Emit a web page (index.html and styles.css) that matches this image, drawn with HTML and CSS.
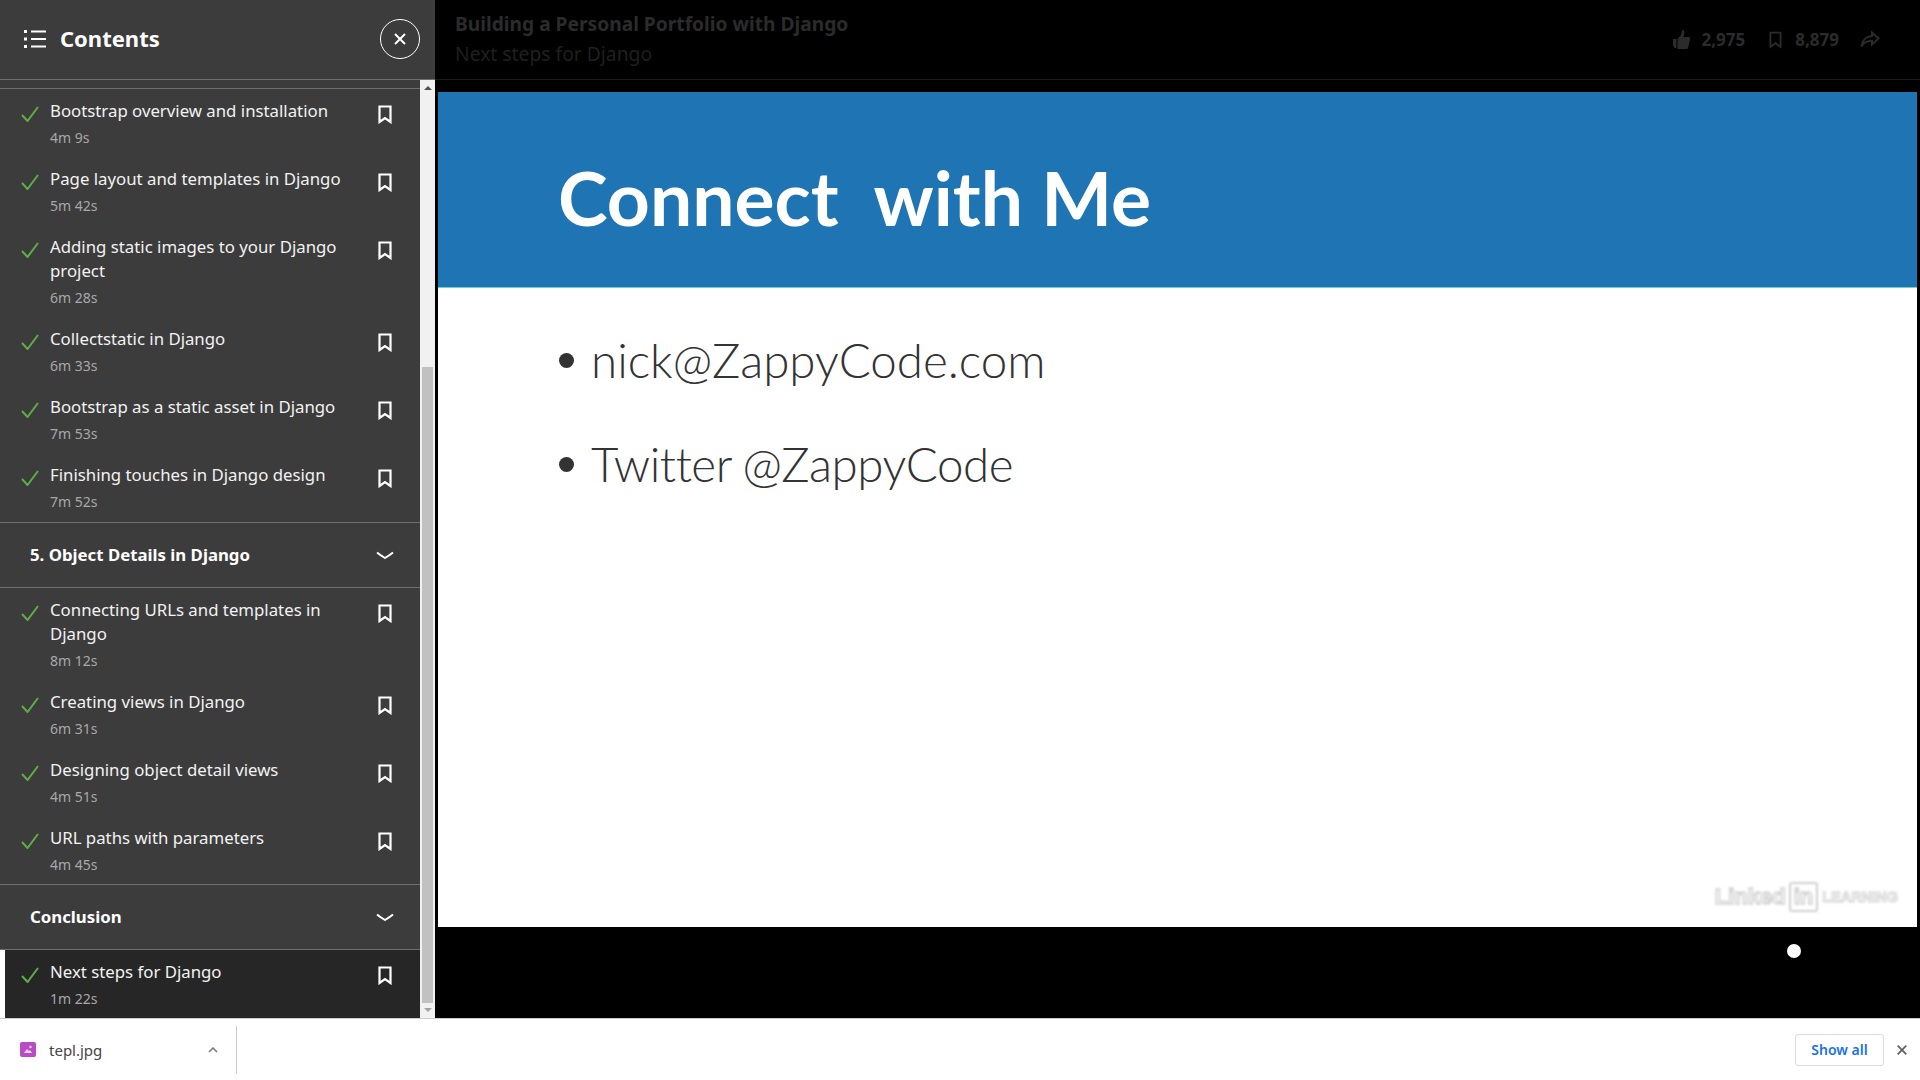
FILE: index.html
```html
<!DOCTYPE html>
<html lang="en">
<head>
<meta charset="UTF-8">
<meta name="viewport" content="width=device-width, initial-scale=1.0">
<title>Next steps for Django</title>
<link rel="stylesheet" href="styles.css">
</head>
<body>
<svg class="defs" width="0" height="0">
  <symbol id="check" viewBox="0 0 18 16"><path d="M1 9l5.500 6L17 1" fill="none" stroke="#5fae45" stroke-width="2"/></symbol>
  <symbol id="mark" viewBox="0 0 14 19"><path d="M1.500 1.500h11v15.500L7 13l-5.500 4z" fill="none" stroke="#fff" stroke-width="2.200"/></symbol>
  <symbol id="chev" viewBox="0 0 18 9"><path d="M1 1.500c3 2.500 5.500 4 8 5.500 2.500-1.500 5-3 8-5.500" fill="none" stroke="#fff" stroke-width="2"/></symbol>
</svg>
<div class="main">
  <aside class="sidebar">
    <header class="side-head">
      <svg class="list-icon" width="24" height="20" viewBox="0 0 24 20"><path d="M8 2.500h15M8 10h15M8 17.500h15" stroke="#fff" stroke-width="2"/><path d="M1 1h3v3H1zM1 8.500h3v3H1zM1 16h3v3H1z" fill="#fff"/></svg>
      <h1>Contents</h1>
      <button class="close-btn"><svg width="12" height="12" viewBox="0 0 12 12"><path d="M1 1l10 10M11 1L1 11" stroke="#fff" stroke-width="2"/></svg></button>
    </header>
    <div class="side-body">
      <div class="toc">
        <div class="toc-top"></div>
        <ul class="lessons first">
          <li><svg class="check"><use href="#check"/></svg><div class="txt"><p>Bootstrap overview and installation</p><span>4m 9s</span></div><svg class="mark"><use href="#mark"/></svg></li>
          <li><svg class="check"><use href="#check"/></svg><div class="txt"><p>Page layout and templates in Django</p><span>5m 42s</span></div><svg class="mark"><use href="#mark"/></svg></li>
          <li><svg class="check"><use href="#check"/></svg><div class="txt"><p>Adding static images to your Django project</p><span>6m 28s</span></div><svg class="mark"><use href="#mark"/></svg></li>
          <li><svg class="check"><use href="#check"/></svg><div class="txt"><p>Collectstatic in Django</p><span>6m 33s</span></div><svg class="mark"><use href="#mark"/></svg></li>
          <li><svg class="check"><use href="#check"/></svg><div class="txt"><p>Bootstrap as a static asset in Django</p><span>7m 53s</span></div><svg class="mark"><use href="#mark"/></svg></li>
          <li><svg class="check"><use href="#check"/></svg><div class="txt"><p>Finishing touches in Django design</p><span>7m 52s</span></div><svg class="mark"><use href="#mark"/></svg></li>
        </ul>
        <div class="chapter"><h2>5. Object Details in Django</h2><svg class="chev"><use href="#chev"/></svg></div>
        <ul class="lessons">
          <li><svg class="check"><use href="#check"/></svg><div class="txt"><p>Connecting URLs and templates in Django</p><span>8m 12s</span></div><svg class="mark"><use href="#mark"/></svg></li>
          <li><svg class="check"><use href="#check"/></svg><div class="txt"><p>Creating views in Django</p><span>6m 31s</span></div><svg class="mark"><use href="#mark"/></svg></li>
          <li><svg class="check"><use href="#check"/></svg><div class="txt"><p>Designing object detail views</p><span>4m 51s</span></div><svg class="mark"><use href="#mark"/></svg></li>
          <li><svg class="check"><use href="#check"/></svg><div class="txt"><p>URL paths with parameters</p><span>4m 45s</span></div><svg class="mark"><use href="#mark"/></svg></li>
        </ul>
        <div class="chapter"><h2>Conclusion</h2><svg class="chev"><use href="#chev"/></svg></div>
        <ul class="lessons">
          <li class="current"><svg class="check"><use href="#check"/></svg><div class="txt"><p>Next steps for Django</p><span>1m 22s</span></div><svg class="mark"><use href="#mark"/></svg></li>
        </ul>
      </div>
      <div class="scrollbar">
        <div class="arrow up"></div>
        <div class="thumb"></div>
        <div class="arrow down"></div>
      </div>
    </div>
  </aside>
  <section class="player">
    <header class="topbar">
      <div class="titles">
        <div class="course">Building a Personal Portfolio with Django</div>
        <div class="lesson-name">Next steps for Django</div>
      </div>
      <div class="stats">
        <svg width="17" height="19" viewBox="0 0 17 19"><path d="M0 9h3.500v9H1.500L0 16zM4.500 9L8 5 9 0c2 0 2.800 1.500 2.300 3.500L10.500 7H16c1 0 1 1 1 2l-1.800 8.500c-.3 1-1 1.500-2 1.500H4.500z" fill="#2b2b2b"/></svg>
        <span class="num">2,975</span>
        <svg class="stat-mark" width="13" height="18" viewBox="0 0 14 19"><path d="M1.500 1.500h11v15.500L7 13l-5.500 4z" fill="none" stroke="#2b2b2b" stroke-width="2"/></svg>
        <span class="num">8,879</span>
        <svg class="share" width="20" height="17" viewBox="0 0 20 17"><path d="M12 1.500l6.500 6-6.500 6V10C7 9.500 3.500 11.500 1.500 15.500 2 9.500 6 5.500 12 5z" fill="none" stroke="#2b2b2b" stroke-width="2"/></svg>
      </div>
    </header>
    <div class="slide">
      <div class="slide-head">Connect  with Me</div>
      <ul class="slide-list">
        <li>nick@ZappyCode.com</li>
        <li>Twitter @ZappyCode</li>
      </ul>
      <div class="watermark"><span>Linked</span><b>in</b><i>LEARNING</i></div>
    </div>
    <div class="controls"><div class="dot"></div></div>
  </section>
</div>
<footer class="downloads">
  <div class="dl-item">
    <svg width="16" height="15" viewBox="0 0 16 15"><rect width="16" height="15" rx="2" fill="#b84cc4"/><path d="M4 11l3-4 2 2 1-1 2 3z" fill="#f3d3f7"/><circle cx="10.500" cy="5" r="1.200" fill="#f3d3f7"/></svg>
    <span>tepl.jpg</span>
    <svg class="dl-chev" width="10" height="6" viewBox="0 0 10 6"><path d="M1 5l4-4 4 4" fill="none" stroke="#777" stroke-width="1.500"/></svg>
  </div>
  <button class="show-all">Show all</button>
  <svg class="dl-close" width="10" height="10" viewBox="0 0 10 10"><path d="M.7.7l8.600 8.600M9.300.7L.7 9.300" stroke="#5f6368" stroke-width="1.800"/></svg>
</footer>
</body>
</html>
```

FILE: styles.css
```css
* {
  box-sizing: border-box;
}
body {
  margin: 0;
  width: 1920px;
  height: 1080px;
  overflow: hidden;
  background-color: #000;
  font-family: "Noto Sans", Arial, sans-serif;
}
.defs {
  position: absolute;
}
h1, h2, p, ul {
  margin: 0;
  padding: 0;
}
ul {
  list-style: none;
}
.main {
  display: flex;
  height: 1018px;
}

/* sidebar */
.sidebar {
  width: 435px;
  flex: none;
  display: flex;
  flex-direction: column;
  background-color: #3c3c3c;
}
.side-head {
  height: 80px;
  flex: none;
  display: flex;
  align-items: center;
  padding: 0 15px 2px 23px;
  border-bottom: 1px solid #6e6e6e;
}
.side-head h1 {
  flex: 1;
  margin: -2px 0 0 13px;
  font-size: 22px;
  font-weight: 700;
  color: #fff;
}
.close-btn {
  width: 40px;
  height: 40px;
  padding: 0;
  display: flex;
  align-items: center;
  justify-content: center;
  background: none;
  border: 1.500px solid #fff;
  border-radius: 50%;
}
.side-body {
  flex: 1;
  display: flex;
  min-height: 0;
}
.toc {
  width: 420px;
  flex: none;
}
.toc-top {
  height: 9px;
  border-bottom: 1px solid #6e6e6e;
}
.lessons li {
  display: flex;
  padding: 10px 28px 9px 21px;
}
.lessons.first {
  padding-bottom: 1px;
}
.check {
  width: 18px;
  height: 16px;
  margin-top: 7px;
  flex: none;
}
.txt {
  flex: 1;
  margin-left: 11px;
  padding-right: 20px;
}
.txt p {
  font-size: 16.800px;
  line-height: 24px;
  color: #f2f2f2;
}
.txt span {
  display: block;
  margin-top: 5px;
  font-size: 14px;
  line-height: 20px;
  color: #a8a8a8;
}
.mark {
  width: 14px;
  height: 19px;
  margin-top: 6px;
  flex: none;
}
.lessons li.current {
  background-color: #262626;
  border-left: 5px solid #fff;
  padding-left: 16px;
}
.chapter {
  height: 66px;
  display: flex;
  align-items: center;
  justify-content: space-between;
  padding: 0 26px 0 30px;
  border-top: 1px solid #6e6e6e;
  border-bottom: 1px solid #6e6e6e;
}
.chapter h2 {
  margin-top: -2px;
  font-size: 16.800px;
  font-weight: 700;
  color: #fff;
}
.chev {
  width: 18px;
  height: 9px;
}
.scrollbar {
  width: 15px;
  flex: none;
  display: flex;
  flex-direction: column;
  align-items: center;
  background-color: #f1f1f1;
  padding: 6px 0;
}
.arrow {
  width: 0;
  height: 0;
  border-left: 4px solid transparent;
  border-right: 4px solid transparent;
  flex: none;
}
.arrow.up {
  border-bottom: 4px solid #505050;
}
.arrow.down {
  border-top: 4px solid #a3a3a3;
}
.thumb {
  width: 11px;
  flex: 1;
  margin: 277px 0 5px;
  background-color: #c1c1c1;
}

/* player */
.player {
  flex: 1;
  display: flex;
  flex-direction: column;
  min-width: 0;
}
.topbar {
  height: 92px;
  flex: none;
  display: flex;
  justify-content: space-between;
  padding: 0 40px 12px 20px;
  background: linear-gradient(#000 79px, #1a1a1a 79px, #1a1a1a 80px, #000 80px);
}
.titles {
  padding-top: 10px;
}
.course {
  font-size: 19.200px;
  line-height: 28px;
  font-weight: 700;
  color: #2b2b2b;
}
.lesson-name {
  margin-top: 2px;
  font-size: 19.300px;
  line-height: 28px;
  color: #1f1f1f;
}
.stats {
  display: flex;
  align-items: center;
  height: 79px;
}
.num {
  margin-left: 12px;
  font-size: 17px;
  font-weight: 700;
  color: #2b2b2b;
}
.stat-mark {
  margin-left: 24px;
}
.stat-mark + .num {
  margin-left: 13px;
}
.share {
  margin-left: 21px;
}
.slide {
  position: relative;
  height: 835px;
  flex: none;
  margin: 0 3px;
  background-color: #fff;
  font-family: Lato, "Noto Sans", sans-serif;
}
.slide-head {
  height: 196px;
  padding: 60px 0 0 120px;
  background-color: #1f74b4;
  border-bottom: 1px solid #6fd0c8;
  font-size: 75px;
  line-height: 90px;
  font-weight: 700;
  color: #fff;
  white-space: pre;
}
.slide-list {
  padding: 44px 0 0 121px;
  font-size: 47.500px;
  font-weight: 300;
  line-height: 56px;
  color: #333;
}
.slide-list li {
  display: flex;
  align-items: center;
  margin-bottom: 48px;
}
.slide-list li + li {
  letter-spacing: -.45px;
  word-spacing: -1px;
}
.slide-list li::before {
  content: "";
  width: 15px;
  height: 15px;
  margin-right: 17px;
  border-radius: 50%;
  background-color: #333;
}
.watermark {
  position: absolute;
  right: 19px;
  bottom: 15px;
  display: flex;
  align-items: center;
  filter: blur(1px);
  color: #fff;
  font-family: "Liberation Sans", sans-serif;
  font-weight: 700;
  font-size: 22px;
  -webkit-text-stroke: 1.500px #d0d0d0;
}
.watermark b {
  margin: 0 4px 0 3px;
  padding: 0 3px;
  border: 2px solid #d0d0d0;
  border-radius: 3px;
}
.watermark i {
  font-style: normal;
  font-size: 14.500px;
  -webkit-text-stroke: 1px #d0d0d0;
}
.controls {
  flex: 1;
  display: flex;
  justify-content: flex-end;
  padding: 17px 119px 0 0;
}
.dot {
  width: 14px;
  height: 14px;
  border-radius: 50%;
  background-color: #fff;
}

/* download bar */
.downloads {
  height: 62px;
  display: flex;
  align-items: center;
  padding-right: 13px;
  background-color: #fff;
  border-top: 1px solid #ccc;
}
.dl-item {
  width: 237px;
  height: 48px;
  display: flex;
  align-items: center;
  padding-left: 20px;
  border-right: 1px solid #ccc;
  font-size: 15px;
  color: #444;
  margin-right: auto;
}
.dl-item span {
  flex: 1;
  margin-left: 13px;
}
.dl-chev {
  margin-right: 18px;
}
.show-all {
  width: 89px;
  height: 32px;
  padding: 0;
  background: #fff;
  border: 1px solid #dadce0;
  border-radius: 3px;
  font-family: inherit;
  font-size: 14px;
  font-weight: 600;
  color: #1a73e8;
}
.dl-close {
  margin-left: 13px;
}
```
